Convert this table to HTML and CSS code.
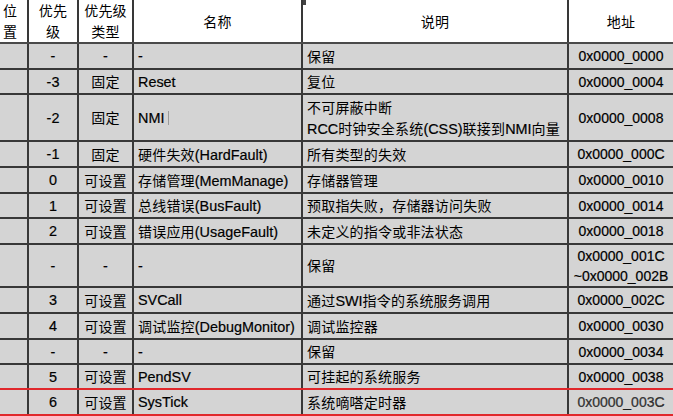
FILE: index.html
```html
<!DOCTYPE html>
<html lang="zh">
<head>
<meta charset="utf-8">
<title>异常向量表</title>
<link rel="stylesheet" href="styles.css">
</head>
<body>
<table class="vt">
  <colgroup>
    <col class="c-pos"><col class="c-pri"><col class="c-type"><col class="c-name"><col class="c-desc"><col class="c-addr">
  </colgroup>
  <thead>
    <tr class="hd">
      <th><span class="zh">位<br>置</span></th>
      <th><span class="zh">优先<br>级</span></th>
      <th><span class="zh">优先级<br>类型</span></th>
      <th><span class="zh">名称</span></th>
      <th><span class="zh">说明</span><span class="tick"></span></th>
      <th><span class="zh">地址</span></th>
    </tr>
  </thead>
  <tbody>
    <tr class="r26">
      <td></td><td class="ctr">-</td><td class="ctr">-</td><td class="lft">-</td>
      <td class="lft"><span class="zh">保留</span></td><td class="ctr addr">0x0000_0000</td>
    </tr>
    <tr class="r25">
      <td></td><td class="ctr">-3</td><td class="ctr"><span class="zh">固定</span></td><td class="lft">Reset</td>
      <td class="lft"><span class="zh">复位</span></td><td class="ctr addr">0x0000_0004</td>
    </tr>
    <tr class="r47">
      <td></td><td class="ctr">-2</td><td class="ctr"><span class="zh">固定</span></td><td class="lft">NMI<span class="caret"></span></td>
      <td class="lft two"><span class="zh">不可屏蔽中断</span><br>RCC<span class="zh">时钟安全系统</span>(CSS)<span class="zh">联接到</span>NMI<span class="zh">向量</span></td><td class="ctr addr">0x0000_0008</td>
    </tr>
    <tr class="r26">
      <td></td><td class="ctr">-1</td><td class="ctr"><span class="zh">固定</span></td><td class="lft"><span class="zh">硬件失效</span>(HardFault)</td>
      <td class="lft"><span class="zh">所有类型的失效</span></td><td class="ctr addr">0x0000_000C</td>
    </tr>
    <tr class="r26">
      <td></td><td class="ctr">0</td><td class="ctr"><span class="zh">可设置</span></td><td class="lft"><span class="zh">存储管理</span>(MemManage)</td>
      <td class="lft"><span class="zh">存储器管理</span></td><td class="ctr addr">0x0000_0010</td>
    </tr>
    <tr class="r25">
      <td></td><td class="ctr">1</td><td class="ctr"><span class="zh">可设置</span></td><td class="lft"><span class="zh">总线错误</span>(BusFault)</td>
      <td class="lft"><span class="zh">预取指失败，存储器访问失败</span></td><td class="ctr addr">0x0000_0014</td>
    </tr>
    <tr class="r26">
      <td></td><td class="ctr">2</td><td class="ctr"><span class="zh">可设置</span></td><td class="lft"><span class="zh">错误应用</span>(UsageFault)</td>
      <td class="lft"><span class="zh">未定义的指令或非法状态</span></td><td class="ctr addr">0x0000_0018</td>
    </tr>
    <tr class="r43">
      <td></td><td class="ctr">-</td><td class="ctr">-</td><td class="lft">-</td>
      <td class="lft"><span class="zh">保留</span></td><td class="ctr addr two2">0x0000_001C<br>~0x0000_002B</td>
    </tr>
    <tr class="r26">
      <td></td><td class="ctr">3</td><td class="ctr"><span class="zh">可设置</span></td><td class="lft">SVCall</td>
      <td class="lft"><span class="zh">通过</span>SWI<span class="zh">指令的系统服务调用</span></td><td class="ctr addr">0x0000_002C</td>
    </tr>
    <tr class="r26">
      <td></td><td class="ctr">4</td><td class="ctr"><span class="zh">可设置</span></td><td class="lft"><span class="zh">调试监控</span>(DebugMonitor)</td>
      <td class="lft"><span class="zh">调试监控器</span></td><td class="ctr addr">0x0000_0030</td>
    </tr>
    <tr class="r25">
      <td></td><td class="ctr">-</td><td class="ctr">-</td><td class="lft">-</td>
      <td class="lft"><span class="zh">保留</span></td><td class="ctr addr">0x0000_0034</td>
    </tr>
    <tr class="r25 red">
      <td></td><td class="ctr">5</td><td class="ctr"><span class="zh">可设置</span></td><td class="lft">PendSV</td>
      <td class="lft"><span class="zh">可挂起的系统服务</span></td><td class="ctr addr">0x0000_0038</td>
    </tr>
    <tr class="r26 red">
      <td></td><td class="ctr">6</td><td class="ctr"><span class="zh">可设置</span></td><td class="lft">SysTick</td>
      <td class="lft"><span class="zh">系统嘀嗒定时器</span></td><td class="ctr addr wm">0x0000_003C</td>
    </tr>
    <tr class="r26">
      <td></td><td></td><td></td><td></td><td></td><td></td>
    </tr>
  </tbody>
</table>
</body>
</html>
```

FILE: styles.css
```css
html, body {
  margin: 0;
  padding: 0;
  background: #d4d4d4;
  overflow: hidden;
}

.vt {
  border-collapse: collapse;
  table-layout: fixed;
  width: 673px;
  font-family: "Liberation Sans", "Noto Sans CJK SC", sans-serif;
  font-size: 14.4px;
  color: #000000;
  background: #d4d4d4;
  -webkit-text-stroke: 0.2px #000;
}

.c-pos { width: 28px; }
.c-pri { width: 50px; }
.c-type { width: 55px; }
.c-name { width: 169px; }
.c-desc { width: 266px; }
.c-addr { width: 105px; }

.zh {
  font-family: "Noto Sans CJK SC", sans-serif;
  font-size: 14px;
  letter-spacing: 0.2px;
  -webkit-text-stroke: 0;
}

.vt th,
.vt td {
  border: 2px solid #383838;
  padding: 0 4px;
  overflow: hidden;
  white-space: nowrap;
  vertical-align: middle;
  line-height: 16px;
}

.vt td .zh { line-height: 16px; }

.vt tr > :first-child { border-left: none; }
.vt tr > :last-child { border-right: none; }
.vt thead th { border-top: none; }

.hd {
  height: 40px;
  background: #ffffff;
}

.vt .hd th {
  font-weight: normal;
  text-align: center;
  line-height: 20px;
  border-bottom: 2px solid #4a4a4a;
  position: relative;
  padding-top: 0;
  padding-bottom: 0;
}

.vt .hd th:first-child { text-align: left; padding-left: 3px; }

.tick {
  position: absolute;
  left: 0;
  top: 0;
  width: 3px;
  height: 5px;
  background: #444;
}

.r25 { height: 25px; }
.r26 { height: 26px; }
.r43 { height: 43px; }
.r47 { height: 47px; }

.ctr { text-align: center; }
.lft { text-align: left; }
.addr { font-size: 14px; }

.vt td.two { line-height: 20px; }
.vt td.two .zh { line-height: 20px; }
.vt td.two2 { line-height: 20px; }

.caret {
  display: inline-block;
  width: 1px;
  height: 14px;
  margin-left: 4px;
  vertical-align: -2px;
  background: #9a9a9a;
}

.vt tr.red td { border-bottom: 2px solid #e0282c; }

.wm { color: #3a3a3a; }
```
